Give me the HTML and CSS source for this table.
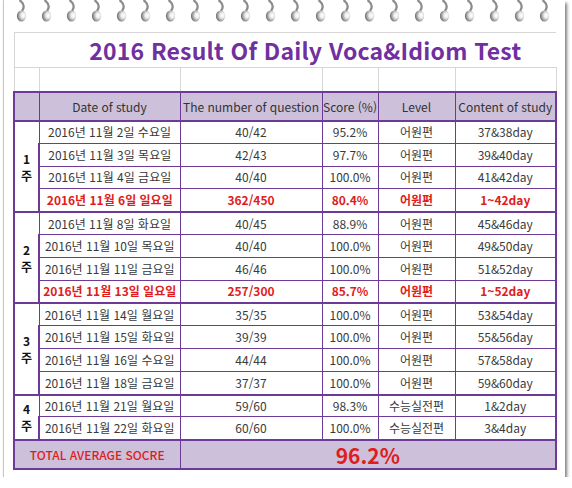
FILE: index.html
```html
<!DOCTYPE html>
<html lang="ko">

<head>
    <meta charset="UTF-8">
    <meta name="viewport" content="width=device-width, initial-scale=1.0">
    <title>2016 Result Of Daily Voca&amp;Idiom Test</title>
    <link rel="stylesheet" href="styles.css">
</head>

<body>
    <div class="paper">
        <div class="rings">
            <svg class="ring" viewBox="0 0 11 24"><defs><radialGradient id="hole" cx="0.68" cy="0.45" r="0.75"><stop offset="0" stop-color="#fff"/><stop offset="0.3" stop-color="#eee"/><stop offset="0.75" stop-color="#8a8a8a"/><stop offset="1" stop-color="#555"/></radialGradient></defs><path d="M3.5 0 C7.5 3, 9 7, 6 11" fill="none" stroke="#8c8c8c" stroke-width="2.2"/><ellipse cx="5.5" cy="16" rx="4.6" ry="5.6" fill="url(#hole)"/></svg>
        </div>
        <table class="sheet">
            <colgroup>
                <col class="c-week">
                <col class="c-date">
                <col class="c-num">
                <col class="c-score">
                <col class="c-level">
                <col class="c-content">
            </colgroup>
            <thead>
                <tr class="title">
                    <td colspan="6">2016 Result Of Daily Voca&amp;Idiom Test</td>
                </tr>
                <tr class="blank">
                    <td></td><td></td><td></td><td></td><td></td><td></td>
                </tr>
                <tr class="head">
                    <th></th>
                    <th>Date of study</th>
                    <th>The number of question</th>
                    <th>Score (%)</th>
                    <th>Level</th>
                    <th>Content of study</th>
                </tr>
            </thead>
            <tbody id="rows"></tbody>
            <tfoot>
                <tr class="total">
                    <td colspan="2" class="total-label">TOTAL AVERAGE SOCRE</td>
                    <td colspan="4" class="total-value">96.2%</td>
                </tr>
            </tfoot>
        </table>
    </div>

    <script>
        // 링 22개 복제
        var rings = document.querySelector(".rings")
        var first = rings.children[0]
        for (let i = 1; i < 22; i++) {
            var r = first.cloneNode(true)
            rings.appendChild(r)
        }

        var weeks = [
            [
                ["2016년 11월 2일 수요일", "40/42", "95.2%", "어원편", "37&38day"],
                ["2016년 11월 3일 목요일", "42/43", "97.7%", "어원편", "39&40day"],
                ["2016년 11월 4일 금요일", "40/40", "100.0%", "어원편", "41&42day"],
                ["2016년 11월 6일 일요일", "362/450", "80.4%", "어원편", "1~42day", "sum"]
            ],
            [
                ["2016년 11월 8일 화요일", "40/45", "88.9%", "어원편", "45&46day"],
                ["2016년 11월 10일 목요일", "40/40", "100.0%", "어원편", "49&50day"],
                ["2016년 11월 11일 금요일", "46/46", "100.0%", "어원편", "51&52day"],
                ["2016년 11월 13일 일요일", "257/300", "85.7%", "어원편", "1~52day", "sum"]
            ],
            [
                ["2016년 11월 14일 월요일", "35/35", "100.0%", "어원편", "53&54day"],
                ["2016년 11월 15일 화요일", "39/39", "100.0%", "어원편", "55&56day"],
                ["2016년 11월 16일 수요일", "44/44", "100.0%", "어원편", "57&58day"],
                ["2016년 11월 18일 금요일", "37/37", "100.0%", "어원편", "59&60day"]
            ],
            [
                ["2016년 11월 21일 월요일", "59/60", "98.3%", "수능실전편", "1&2day"],
                ["2016년 11월 22일 화요일", "60/60", "100.0%", "수능실전편", "3&4day"]
            ]
        ]

        var tbody = document.getElementById("rows")
        for (let w = 0; w < weeks.length; w++) {
            var list = weeks[w]
            for (let i = 0; i < list.length; i++) {
                var tr = document.createElement("tr")
                tr.className = i == 0 ? "row first" : "row"
                if (i == 0) {
                    var wk = document.createElement("td")
                    wk.className = "week"
                    wk.rowSpan = list.length
                    wk.innerHTML = (w + 1) + "<br>주"
                    tr.appendChild(wk)
                }
                for (let j = 0; j < 5; j++) {
                    var td = document.createElement("td")
                    td.textContent = list[i][j]
                    if (list[i][5] == "sum") td.className = "sum"
                    tr.appendChild(td)
                }
                tbody.appendChild(tr)
            }
        }
    </script>
</body>

</html>
```

FILE: styles.css
```css
* {
    margin: 0;
    padding: 0;
}

body {
    background-color: #fff;
    font-family: "Noto Sans CJK KR", "Noto Sans", sans-serif;
    color: #3a3a3a;
}

.paper {
    width: 561px;
    height: 477px;
    margin-left: 3px;
    border-left: 1px solid #c6c6c6;
    background-color: #fff;
    box-shadow: 2px 3px 3px rgba(0, 0, 0, .5);
}

.rings {
    display: flex;
    justify-content: space-between;
    width: 534px;
    height: 32px;
    padding-left: 12px;
}

.ring {
    width: 11px;
    height: 24px;
}

.sheet {
    border-collapse: collapse;
    margin-left: 9px;
    table-layout: fixed;
    width: 542px;
}

.c-week { width: 25px; }
.c-date { width: 141px; }
.c-num { width: 142px; }
.c-score { width: 56px; }
.c-level { width: 77px; }
.c-content { width: 101px; }

.sheet td,
.sheet th {
    padding: 0;
    text-align: center;
    font-size: 12px;
    font-weight: normal;
    line-height: 14px;
    white-space: nowrap;
    border: 1px solid #6d3a98;
    height: 21.8px;
}

.sheet .title td {
    height: 34px;
    border: 1px solid #d6d6d6;
    border-right: 0;
    color: #7030a0;
    font-size: 23px;
    font-weight: bold;
    line-height: 28px;
    padding-left: 40px;
    letter-spacing: .2px;
}

.sheet .blank td {
    height: 23px;
    border: 1px solid #d6d6d6;
    border-bottom: 2px solid #6d3a98;
}

.sheet .head th {
    height: 27px;
    background-color: #ccc0da;
    border-bottom: 2px solid #6d3a98;
    color: #333;
}

.sheet .first td {
    height: 20.8px;
    border-top: 2px solid #6d3a98;
}

.sheet .head th:first-child,
.sheet .row td:first-child,
.sheet .total td:first-child {
    border-left: 2px solid #6d3a98;
}

.sheet .head th:last-child,
.sheet .row td:last-child,
.sheet .total td:last-child {
    border-right: 2px solid #6d3a98;
}

.sheet .week {
    font-weight: bold;
    color: #111;
    line-height: 17px;
    border-right: 1px solid #6d3a98;
}

.sheet .sum {
    color: #e01c1c;
    font-weight: bold;
}

.sheet .total td {
    height: 27px;
    background-color: #ccc0da;
    border-top: 2px solid #6d3a98;
    border-bottom: 2px solid #6d3a98;
    color: #e01c1c;
}

.sheet .total-label {
    font-size: 12px;
    font-weight: 500;
}

.sheet .total-value {
    font-size: 21px;
    font-weight: bold;
}
```
